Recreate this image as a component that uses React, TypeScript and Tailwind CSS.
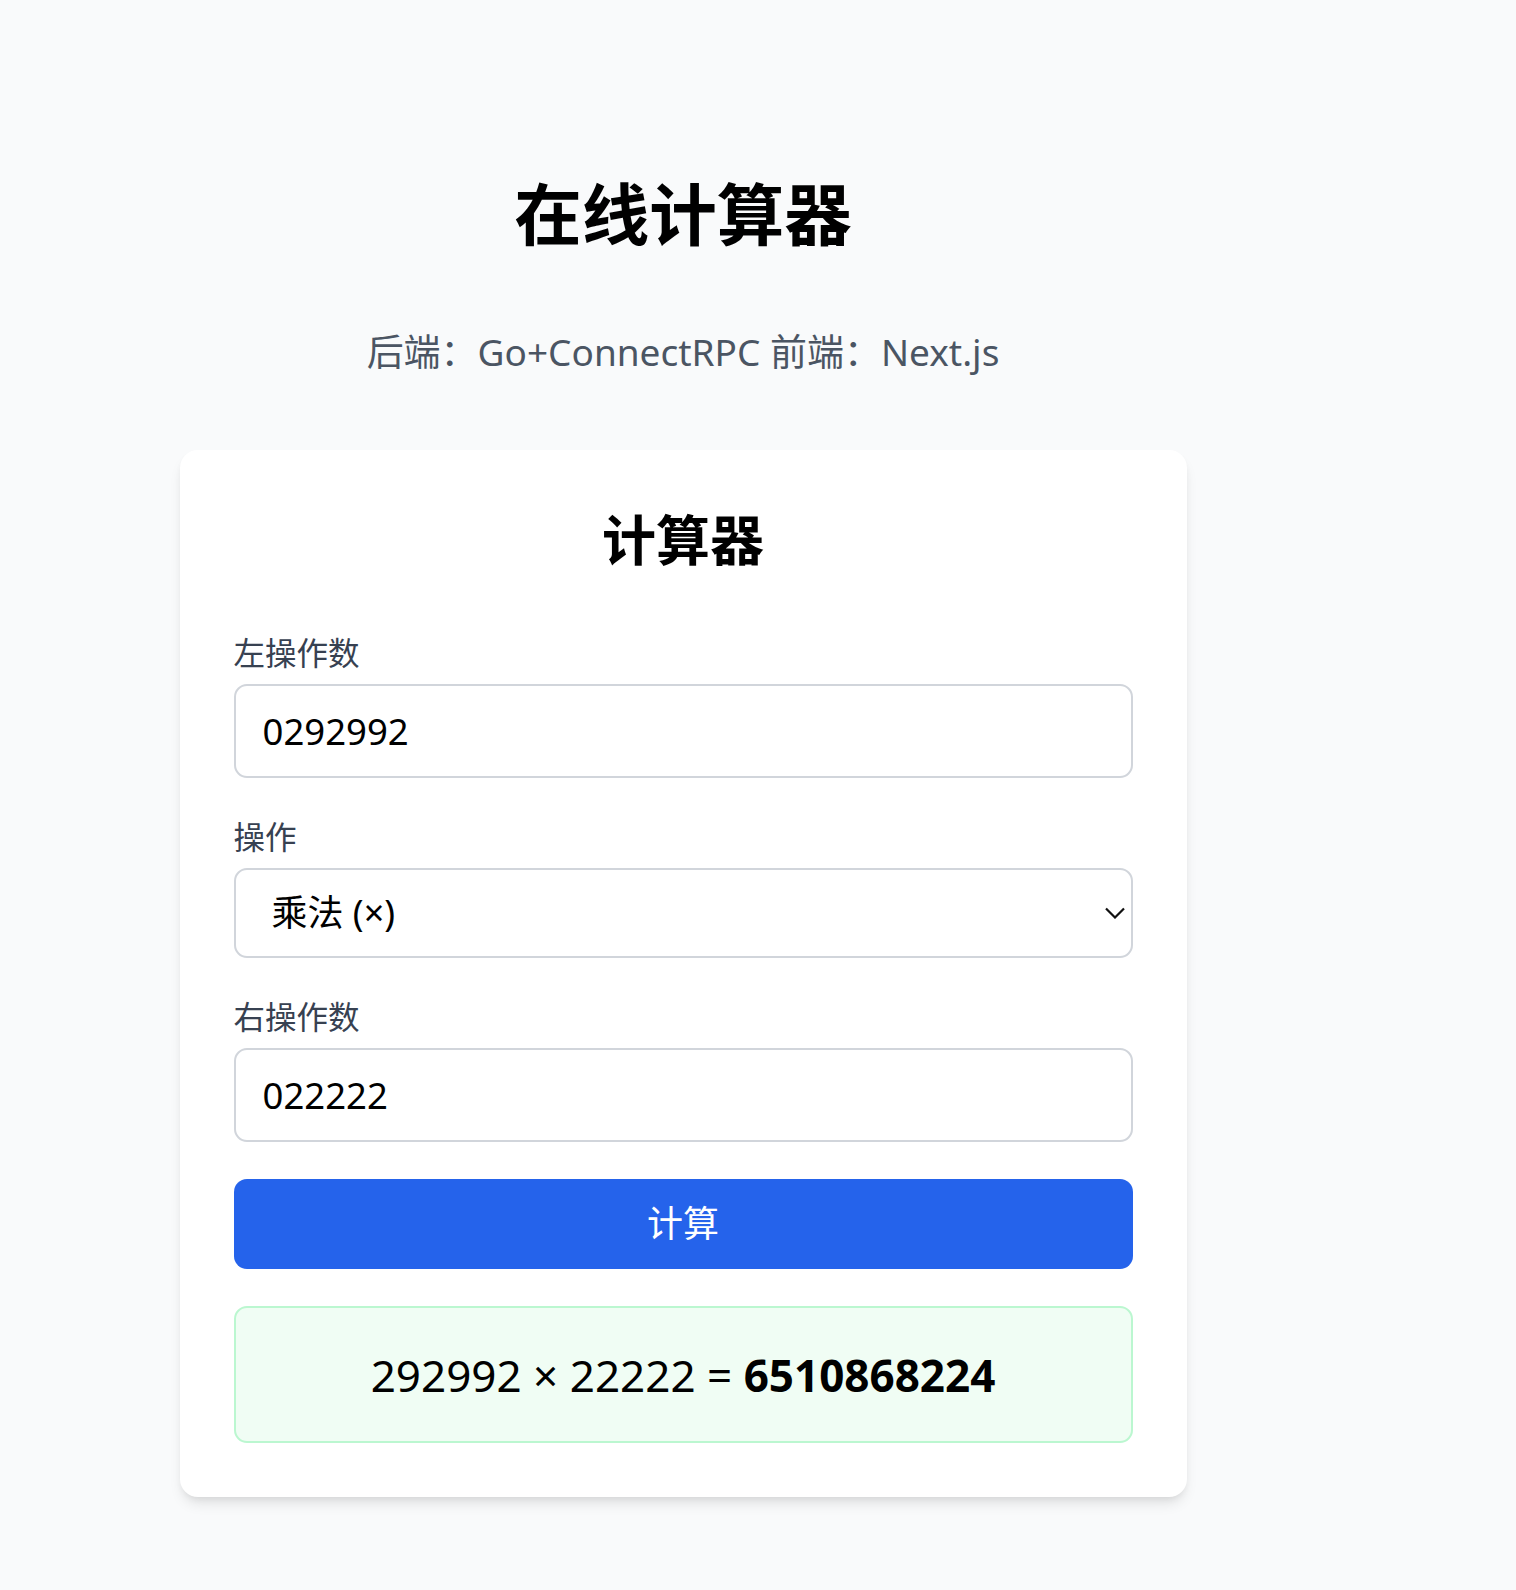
import React, { useState } from "react";

const font = { fontFamily: '"Noto Sans", "Noto Sans CJK SC", sans-serif' };

export default function App() {
  const [left, setLeft] = useState("0292992");
  const [op, setOp] = useState("mul");
  const [right, setRight] = useState("022222");

  return (
    <div className="min-h-[1590px] w-full bg-[#f9fafb]" style={font}>
      <div className="flex w-[1366px] flex-col items-center pt-[174px] pb-[94px]">
        <h1 className="mb-[70px] text-[67.5px] font-bold leading-[81px] text-black">在线计算器</h1>
        <p className="mb-[71px] text-[37px] leading-[54px] text-[#4b5563]">后端：Go+ConnectRPC 前端：Next.js</p>

        {/* Calculator card */}
        <div className="w-[1007px] rounded-[18px] bg-white p-[54px] shadow-[0_9px_14px_-3px_rgba(0,0,0,0.1),0_4px_9px_-4px_rgba(0,0,0,0.1)]">
          <h2 className="mb-[54px] text-center text-[54px] font-bold leading-[72px] text-black">计算器</h2>

          <label className="mb-[9px] block text-[31.5px] leading-[45px] text-[#374151]">左操作数</label>
          <input
            value={left}
            onChange={(e) => setLeft(e.target.value)}
            className="mb-[36px] block h-[94px] w-full rounded-[13px] border-2 border-[#d1d5db] bg-white px-[27px] text-[36.5px] text-black outline-none"
          />

          <label className="mb-[9px] block text-[31.5px] leading-[45px] text-[#374151]">操作</label>
          <div className="relative mb-[36px]">
            <select
              value={op}
              onChange={(e) => setOp(e.target.value)}
              className="block h-[90px] w-full appearance-none rounded-[13px] border-2 border-[#d1d5db] bg-white pl-[36px] pr-[60px] text-[36px] text-black outline-none"
            >
              <option value="add">加法 (+)</option>
              <option value="sub">减法 (−)</option>
              <option value="mul">乘法 (×)</option>
              <option value="div">除法 (÷)</option>
            </select>
            <svg
              className="pointer-events-none absolute right-[8px] top-1/2 -translate-y-1/2"
              width="20"
              height="12"
              viewBox="0 0 20 12"
              fill="none"
            >
              <path d="M1 1.5 L10 10.5 L19 1.5" stroke="#111" strokeWidth="2.2" />
            </svg>
          </div>

          <label className="mb-[9px] block text-[31.5px] leading-[45px] text-[#374151]">右操作数</label>
          <input
            value={right}
            onChange={(e) => setRight(e.target.value)}
            className="mb-[37px] block h-[94px] w-full rounded-[13px] border-2 border-[#d1d5db] bg-white px-[27px] text-[36.5px] text-black outline-none"
          />

          <button className="mb-[37px] block h-[90px] w-full rounded-[13px] bg-[#2563eb] text-[36px] text-white">计算</button>

          {/* Result */}
          <div className="flex h-[137px] items-center justify-center rounded-[13px] border-2 border-[#bbf7d0] bg-[#f0fdf4] text-[44px] text-black">
            <span>
              292992 × 22222 = <span className="font-bold">6510868224</span>
            </span>
          </div>
        </div>
      </div>
    </div>
  );
}
